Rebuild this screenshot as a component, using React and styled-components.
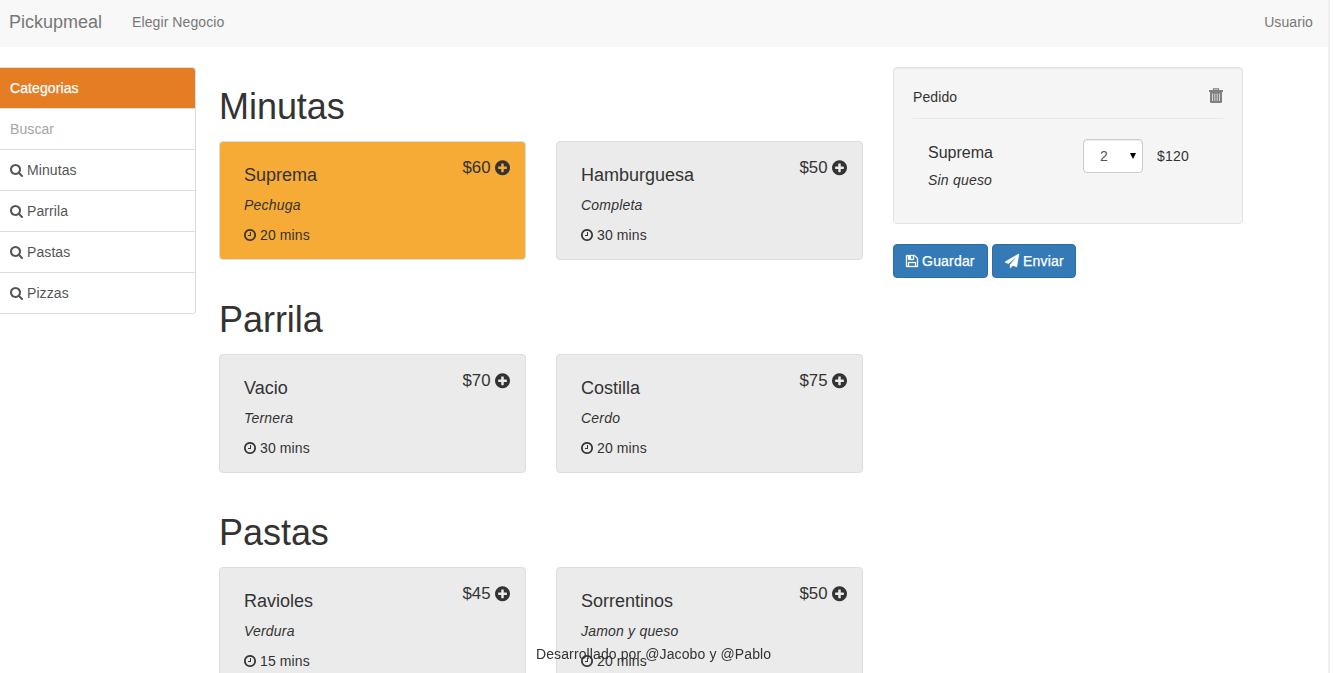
import React from "react";
import styled, { createGlobalStyle } from "styled-components";

const GlobalStyle = createGlobalStyle`
  * { box-sizing: border-box; }
  html, body { height: 100%; overflow: hidden; }
  body {
    margin: 0;
    background: #fff;
    color: #333;
    font: 14px/20px "Liberation Sans", Arial, sans-serif;
    letter-spacing: 0.09px;
  }
`;

const ICONS = {
  search: { x: 64, w: 1664, d: "M1216 832q0-185-131.5-316.5t-316.5-131.5-316.5 131.5-131.5 316.5 131.5 316.5 316.5 131.5 316.5-131.5 131.5-316.5zm512 832q0 52-38 90t-90 38q-54 0-90-38l-343-342q-179 124-399 124-143 0-273.5-55.5t-225-150-150-225-55.5-273.5 55.5-273.5 150-225 225-150 273.5-55.5 273.5 55.5 225 150 150 225 55.5 273.5q0 220-124 399l343 343q37 37 37 90z" },
  plus: { x: 128, w: 1536, d: "M1344 960v-128q0-26-19-45t-45-19h-256v-256q0-26-19-45t-45-19h-128q-26 0-45 19t-19 45v256h-256q-26 0-45 19t-19 45v128q0 26 19 45t45 19h256v256q0 26 19 45t45 19h128q26 0 45-19t19-45v-256h256q26 0 45-19t19-45zm320-64q0 209-103 385.5t-279.5 279.5-385.5 103-385.5-103-279.5-279.5-103-385.5 103-385.5 279.5-279.5 385.5-103 385.5 103 279.5 279.5 103 385.5z" },
  clock: { x: 128, w: 1536, d: "M1024 544v448q0 14-9 23t-23 9h-320q-14 0-23-9t-9-23v-64q0-14 9-23t23-9h224v-352q0-14 9-23t23-9h64q14 0 23 9t9 23zm416 352q0-148-73-273t-198-198-273-73-273 73-198 198-73 273 73 273 198 198 273 73 273-73 198-198 73-273zm224 0q0 209-103 385.5t-279.5 279.5-385.5 103-385.5-103-279.5-279.5-103-385.5 103-385.5 279.5-279.5 385.5-103 385.5 103 279.5 279.5 103 385.5z" },
  save: { x: 128, w: 1536, d: "M512 1536h768v-384h-768v384zm896 0h128v-896q0-14-10-38.5t-20-34.5l-281-281q-10-10-34-20t-39-10v416q0 40-28 68t-68 28h-576q-40 0-68-28t-28-68v-416h-128v1280h128v-416q0-40 28-68t68-28h832q40 0 68 28t28 68v416zm-384-928v-320q0-13-9.5-22.5t-22.5-9.5h-192q-13 0-22.5 9.5t-9.5 22.5v320q0 13 9.5 22.5t22.5 9.5h192q13 0 22.5-9.5t9.5-22.5zm640 32v928q0 40-28 68t-68 28h-1344q-40 0-68-28t-28-68v-1344q0-40 28-68t68-28h928q40 0 88 20t76 48l280 280q28 28 48 76t20 88z" },
  plane: { x: 0, w: 1792, d: "M1764 11q33 24 27 64l-256 1536q-5 29-32 45-14 8-31 8-11 0-24-5l-453-185-242 295q-18 23-49 23-13 0-22-4-19-7-30.5-23.5t-11.5-36.5v-349l864-1059-1069 925-395-162q-37-14-40-55-2-40 32-59l1664-960q15-9 32-9 20 0 36 11z" },
};

const Glyph = styled.svg`
  display: inline-block;
  height: 1em;
  width: ${(p) => p.$ratio}em;
  fill: currentColor;
  stroke: currentColor;
  stroke-width: ${(p) => p.$weight};
  overflow: visible;
  vertical-align: -0.143em;
`;

const Icon = ({ name, weight = 0 }) => {
  const { x, w, d } = ICONS[name];
  return (
    <Glyph $ratio={w / 1792} $weight={weight} viewBox={`${x} 0 ${w} 1792`} aria-hidden="true">
      <path d={d} />
    </Glyph>
  );
};

const Page = styled.div`
  width: 1330px;
  height: 673px;
  overflow: hidden;
  border-right: 2px solid #f0f0f0;
`;

const Navbar = styled.nav`
  display: flex;
  align-items: center;
  height: 47px;
  padding: 0 15px 3px 9px;
  background: #f8f8f8;
  color: #777;
`;

const Brand = styled.span`
  font-size: 18px;
  letter-spacing: 0;
  margin-right: 30px;
`;

const NavLink = styled.span`
  margin-left: ${(p) => (p.$end ? "auto" : "0")};
`;

const Columns = styled.div`
  display: flex;
  align-items: flex-start;
  padding-top: 20px;
`;

const Sidebar = styled.div`
  width: 196px;
  margin-right: 23px;
  border: 1px solid #ddd;
  border-left: 0;
  border-radius: 0 4px 4px 0;
  overflow: hidden;
`;

const SideItem = styled.div`
  height: ${(p) => (p.$active ? 40 : 41)}px;
  padding: 10px;
  border-top: ${(p) => (p.$active ? "0" : "1px solid #ddd")};
  background: ${(p) => (p.$active ? "#e47d24" : "#fff")};
  color: ${(p) => (p.$active ? "#fff" : p.$muted ? "#a5a5a5" : "#555")};
  -webkit-text-stroke: ${(p) => (p.$active ? "0.25px" : "0")};
`;

const Menu = styled.main`
  width: 644px;
  margin-right: 30px;
`;

const Section = styled.section`
  height: 213px;
  padding-top: 20px;
`;

const Title = styled.h1`
  margin: 0 0 14px;
  font-size: 36px;
  font-weight: 400;
  line-height: 40px;
  letter-spacing: -0.04px;
`;

const Cards = styled.div`
  display: grid;
  grid-template-columns: 307px 307px;
  column-gap: 30px;
`;

const Card = styled.article`
  display: flex;
  justify-content: space-between;
  height: 119px;
  padding: 15px 15.5px 0 24px;
  border: 1px solid #ddd;
  border-radius: 4px;
  background: ${(p) => (p.$selected ? "#f6ab36" : "#ebebeb")};
`;

const DishName = styled.h4`
  margin: 8px 0 10px;
  font-size: 18px;
  font-weight: 400;
  line-height: 20px;
  letter-spacing: 0;
`;

const Line = styled.p`
  margin: 0 0 10px;
  font-style: ${(p) => (p.$italic ? "italic" : "normal")};
  letter-spacing: ${(p) => (p.$italic ? 0.2 : 0.12)}px;
`;

const Price = styled.div`
  padding-top: 1px;
  font-size: 16.8px;
  line-height: 20px;
  letter-spacing: 0;
  word-spacing: -0.7px;

  ${Glyph} {
    height: 17.5px;
    width: 15px;
    vertical-align: -3px;
  }
`;

const OrderColumn = styled.aside`
  width: 350px;
`;

const Order = styled.section`
  height: 157px;
  padding: 19px;
  border: 1px solid #e3e3e3;
  border-radius: 4px;
  background: #f5f5f5;
  box-shadow: inset 0 1px 1px rgba(0, 0, 0, 0.05);
`;

const OrderHead = styled.header`
  display: flex;
  justify-content: space-between;
  height: 32px;
  border-bottom: 1px solid #e8e8e8;
`;

const Trash = styled.svg`
  width: 14px;
  height: 16px;
  margin-top: 1px;
  color: #808080;
`;

const OrderRow = styled.div`
  display: flex;
  padding: 20px 16px 0 15px;
`;

const OrderItem = styled.div`
  width: 155px;
  padding-top: 4px;
`;

const ItemName = styled.p`
  margin: 0 0 7px;
  font-size: 16px;
  letter-spacing: 0;
`;

const Quantity = styled.div`
  display: flex;
  align-items: center;
  justify-content: space-between;
  width: 60px;
  height: 34px;
  padding: 0 6px 0 16px;
  margin-right: 14px;
  border: 1px solid #ccc;
  border-radius: 4px;
  background: #fff;
  color: #555;
  box-shadow: inset 0 1px 1px rgba(0, 0, 0, 0.075);
`;

const Caret = styled.span`
  border: 3px solid transparent;
  border-top: 6px solid #000;
  border-bottom: 0;
`;

const Subtotal = styled.span`
  line-height: 34px;
  letter-spacing: 0.2px;
`;

const Actions = styled.div`
  display: flex;
  gap: 4px;
  margin-top: 20px;
`;

const Button = styled.button`
  width: ${(p) => p.$width}px;
  height: 34px;
  padding: 0 0 0 12px;
  border: 1px solid #2e6da4;
  border-radius: 4px;
  background: #337ab7;
  color: #fff;
  font: inherit;
  letter-spacing: 0.18px;
  text-align: left;
  white-space: nowrap;
  -webkit-text-stroke: 0.25px;
`;

const Credits = styled.footer`
  position: fixed;
  left: 536px;
  bottom: 9px;
  letter-spacing: 0.11px;
`;

const sections = [
  { title: "Minutas", dishes: [["Suprema", "Pechuga", 20, 60, true], ["Hamburguesa", "Completa", 30, 50]] },
  { title: "Parrila", dishes: [["Vacio", "Ternera", 30, 70], ["Costilla", "Cerdo", 20, 75]] },
  { title: "Pastas", dishes: [["Ravioles", "Verdura", 15, 45], ["Sorrentinos", "Jamon y queso", 20, 50]] },
];

export default function App() {
  return (
    <Page>
      <GlobalStyle />
      <Navbar>
        <Brand>Pickupmeal</Brand>
        <NavLink>Elegir Negocio</NavLink>
        <NavLink $end>Usuario</NavLink>
      </Navbar>
      <Columns>
        <Sidebar>
          <SideItem $active>Categorias</SideItem>
          <SideItem $muted>Buscar</SideItem>
          {["Minutas", "Parrila", "Pastas", "Pizzas"].map((name) => (
            <SideItem key={name}><Icon name="search" /> {name}</SideItem>
          ))}
        </Sidebar>
        <Menu>
          {sections.map(({ title, dishes }) => (
            <Section key={title}>
              <Title>{title}</Title>
              <Cards>
                {dishes.map(([name, detail, mins, price, selected]) => (
                  <Card key={name} $selected={selected}>
                    <div>
                      <DishName>{name}</DishName>
                      <Line $italic>{detail}</Line>
                      <Line><Icon name="clock" /> {mins} mins</Line>
                    </div>
                    <Price>${price} <Icon name="plus" /></Price>
                  </Card>
                ))}
              </Cards>
            </Section>
          ))}
        </Menu>
        <OrderColumn>
          <Order>
            <OrderHead>
              <span>Pedido</span>
              <Trash viewBox="0 0 14 16">
                <path d="M4.5 2.4V.8h5v1.6" fill="none" stroke="currentColor" strokeWidth="1.2" />
                <path d="M0 2h14v2H0zM1 4h12v10q0 1-1 1H2q-1 0-1-1z" fill="currentColor" />
                <path d="M3.5 5.5V13M5.8 5.5V13M8.2 5.5V13M10.5 5.5V13" stroke="#e0e0e0" strokeWidth="0.9" />
              </Trash>
            </OrderHead>
            <OrderRow>
              <OrderItem>
                <ItemName>Suprema</ItemName>
                <Line $italic>Sin queso</Line>
              </OrderItem>
              <Quantity>2<Caret /></Quantity>
              <Subtotal>$120</Subtotal>
            </OrderRow>
          </Order>
          <Actions>
            <Button $width={95}><Icon name="save" weight={40} /> Guardar</Button>
            <Button $width={84}><Icon name="plane" weight={40} /> Enviar</Button>
          </Actions>
        </OrderColumn>
      </Columns>
      <Credits>Desarrollado por @Jacobo y @Pablo</Credits>
    </Page>
  );
}
